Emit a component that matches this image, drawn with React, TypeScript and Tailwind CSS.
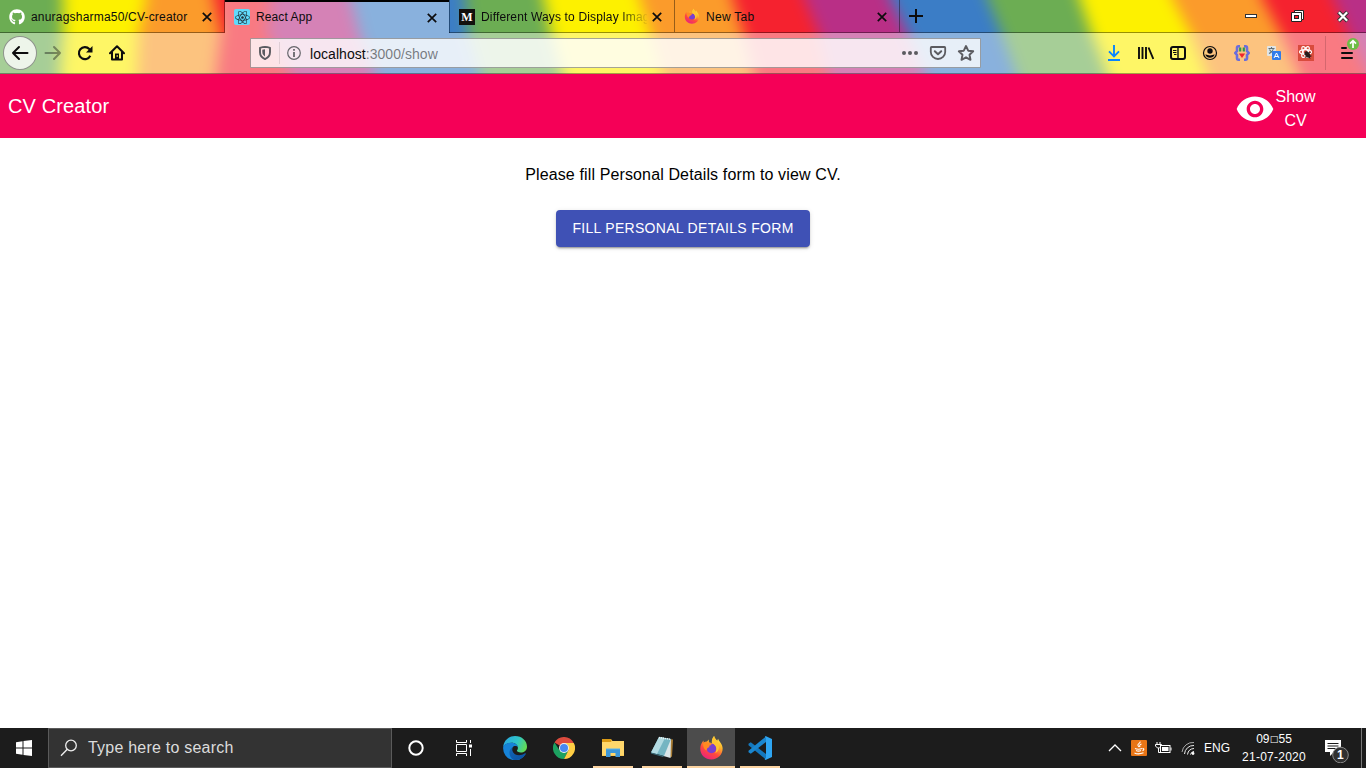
import React from "react";
import { FaGithub, FaReact } from "react-icons/fa";
import { MdVisibility } from "react-icons/md";

const stripes: { color: string; top: number; mid: number; bottom: number }[] = [
  { color: "#6cad53", top: -40, mid: -40, bottom: -40 },
  { color: "#fdf100", top: 63, mid: 63, bottom: 60 },
  { color: "#fb9b2b", top: 146, mid: 139, bottom: 137 },
  { color: "#f5222f", top: 214, mid: 221, bottom: 216 },
  { color: "#b92f86", top: 271, mid: 267, bottom: 290 },
  { color: "#3b7dc6", top: 351, mid: 359, bottom: 375 },
  { color: "#6cad53", top: 465, mid: 468, bottom: 480 },
  { color: "#fdf100", top: 544, mid: 551, bottom: 562 },
  { color: "#fb9b2b", top: 640, mid: 650, bottom: 662 },
  { color: "#f5222f", top: 733, mid: 743, bottom: 754 },
  { color: "#b92f86", top: 805, mid: 818, bottom: 828 },
  { color: "#3b7dc6", top: 891, mid: 907, bottom: 925 },
  { color: "#6cad53", top: 988, mid: 1001, bottom: 1016 },
  { color: "#fdf100", top: 1080, mid: 1091, bottom: 1107 },
  { color: "#fb9b2b", top: 1173, mid: 1190, bottom: 1206 },
  { color: "#f5222f", top: 1263, mid: 1280, bottom: 1299 },
  { color: "#b92f86", top: 1334, mid: 1348, bottom: 1368 },
];

function ThemeArt() {
  return (
    <svg className="absolute inset-0 -z-10" width="1366" height="74" viewBox="0 0 1366 74">
      <defs>
        <filter id="soft" filterUnits="userSpaceOnUse" x="-40" y="-30" width="1450" height="140" colorInterpolationFilters="sRGB">
          <feGaussianBlur stdDeviation="7.5 3" />
        </filter>
      </defs>
      <g filter="url(#soft)">
        {stripes.map((s, i) => (
          <polygon
            key={i}
            fill={s.color}
            points={`${s.top - 5},-25 ${s.top},0 ${s.mid},32 ${s.bottom},73 ${s.bottom + 5},100 1410,100 1410,-25`}
          />
        ))}
      </g>
    </svg>
  );
}

function CloseX() {
  return (
    <svg width="10" height="10" viewBox="0 0 10 10" className="relative top-[1px] shrink-0">
      <path d="M.8 .8l8.400 8.400M9.200 .8L.8 9.200" stroke="#0c0c0d" strokeWidth="1.700" />
    </svg>
  );
}

function Firefox({ size, id }: { size: number; id: string }) {
  return (
    <svg width={size} height={size} viewBox="0 0 24 24" className="shrink-0">
      <defs>
        <linearGradient id={id} x1="0.8" y1="0" x2="0.25" y2="1">
          <stop offset="0" stopColor="#fff44f" />
          <stop offset="0.35" stopColor="#ffb12a" />
          <stop offset="0.65" stopColor="#ff4a3c" />
          <stop offset="1" stopColor="#e81e83" />
        </linearGradient>
      </defs>
      <path
        fill={`url(#${id})`}
        d="M14.5 1c.6 2.400 1.800 3.400 3 4.600.3-1.100.5-1.500.9-2 .4 1.700 1.500 2.500 2.600 4.200 1 1.600 1.700 3.300 1.700 5.200 0 6-4.700 10.500-10.700 10.500S1.200 19 1.200 13.100c0-3.200 1.300-5.900 3.100-7.900l.2 2.200c.9-.8 2-1.200 3.200-1.200L9.300 4.300l.3 2.900c1-.1 2 .2 2.700.8C12 5.200 12.800 2.600 14.500 1Z"
      />
      <ellipse cx="12" cy="12.800" rx="4.800" ry="4.600" fill="#7a3fd0" />
      <path fill="#ff8a22" d="M4 7.600c1.500-1.300 3.500-1.100 4.900-.1 1.300-.1 2.800.3 3.400 1-.4 1.300-1.400 1.800-2.800 2l.8 1c-1.900.5-3.100 1.500-2.900 3.300C5.200 14.400 3.700 11.500 4 7.600Z" />
      <path fill="#ffc431" d="M14.500 1c.2 2.700 4.800 5.500 4.700 10.500-.1 3-1.700 5-3.700 6 1.200-1.700 1.600-4.300.6-6.400-.7-1.600-2-2.700-3.600-3.300C12.300 5.300 13 2.500 14.500 1Z" />
    </svg>
  );
}

function Tab({ icon, title, fade }: { icon: React.ReactNode; title: React.ReactNode; fade?: boolean }) {
  return (
    <div className="flex h-[33px] w-[225px] items-center border-r border-b border-black/40 pr-[12px] pl-[9px]">
      {icon}
      <div
        className={
          fade
            ? "relative top-[1px] ml-[6px] w-[166px] whitespace-nowrap [mask-image:linear-gradient(to_right,black_138px,transparent_168px)]"
            : "relative top-[1px] ml-[6px] w-[166px] whitespace-nowrap"
        }
      >
        {title}
      </div>
      <span className="ml-auto"><CloseX /></span>
    </div>
  );
}

function TabStrip() {
  return (
    <div className="flex h-[33px] text-[12px] text-[#0c0c0d]">
      <Tab icon={<FaGithub size={16} color="#fff" className="relative top-[1px] shrink-0" />} title={<span className="tracking-[0.2px]">anuragsharma50/CV-creator</span>} />
      <div className="flex h-[33px] w-[224px] items-center border-t-2 border-black bg-white/40 pr-[12px] pb-[1px] pl-[9px]">
        <span className="flex size-4 items-center justify-center rounded-[2px] bg-[#61dafb]">
          <FaReact size={15} color="#20333c" />
        </span>
        <span className="ml-[6px] tracking-[0.1px]">React App</span>
        <span className="ml-auto"><CloseX /></span>
      </div>
      <div className="w-px border-b border-black/40 bg-black/40" />
      <Tab
        fade
        icon={
          <span className="relative top-[1px] flex size-4 shrink-0 items-center justify-center bg-[#12100e] font-['Liberation_Serif',serif] text-[12px] leading-none font-bold text-white">
            M
          </span>
        }
        title={<span className="tracking-[0.15px]">Different Ways to Display Imag</span>}
      />
      <Tab icon={<Firefox size={16} id="ffTab" />} title={<span className="tracking-[0.3px]">New Tab</span>} />
      <div className="flex flex-1 items-center border-b border-black/40 pl-[8px]">
        <svg width="16" height="16" viewBox="0 0 16 16">
          <path d="M8 1v14M1 8h14" stroke="#0c0c0d" strokeWidth="2" />
        </svg>
        <div className="ml-auto flex w-[124px] items-center">
          <svg width="124" height="20" viewBox="0 0 124 20">
            <rect x="3.500" y="8.500" width="11" height="3" fill="#fff" stroke="#333" />
            <path d="M52.500 4.500h9v9h-2v2h-10v-9h3z" fill="#fff" stroke="#222" />
            <path d="M52 6.500h7.500V13" fill="none" stroke="#222" />
            <rect x="52.500" y="9.500" width="4" height="3" fill="#f5222f" stroke="#222" />
            <path d="M96.500 6l9 9M105.500 6l-9 9" stroke="#333" strokeWidth="4" />
            <path d="M96.800 6.300l8.400 8.400M105.200 6.300l-8.400 8.400" stroke="#fff" strokeWidth="2.200" />
          </svg>
        </div>
      </div>
    </div>
  );
}

function AddressBar() {
  return (
    <div className="flex h-[30px] w-[731px] items-center rounded-[1px] border border-black/35 bg-white/80 pl-[7px]">
      <svg width="14" height="16" viewBox="0 0 14 16">
        <path d="M7 1.900c2 .1 3.700.5 5 .9v4.500c0 3.300-2.200 5.600-5 6.800-2.800-1.200-5-3.500-5-6.800V2.800c1.300-.4 3-.8 5-.9Z" fill="none" stroke="#5b5b60" strokeWidth="1.900" strokeLinejoin="round" />
        <path d="M7 4.200v7.300c-1.700-1-2.700-2.400-2.700-4.400V4.700c.8-.3 1.700-.4 2.700-.5Z" fill="#5b5b60" />
      </svg>
      <div className="ml-[7px] h-[22px] w-px bg-black/10" />
      <svg width="14" height="14" viewBox="0 0 14 14" className="ml-[7px]">
        <circle cx="7" cy="7" r="6.300" fill="none" stroke="#66666b" strokeWidth="1.200" />
        <path d="M7 3v1.800M7 6v5" stroke="#66666b" strokeWidth="1.800" />
      </svg>
      <span className="relative top-[1px] ml-[9px] text-[14px] tracking-[0.05px] text-black/50">
        <span className="text-[#0c0c0d]">localhost</span>:3000/show
      </span>
      <div className="ml-auto flex items-center pr-[5px]">
        <svg width="18" height="16" viewBox="0 0 18 16">
          <g fill="#5b5b60"><circle cx="3" cy="8" r="2" /><circle cx="9" cy="8" r="2" /><circle cx="15" cy="8" r="2" /></g>
        </svg>
        <svg width="18" height="16" viewBox="0 0 18 16" className="ml-[10px]">
          <path d="M2.500 2h13a.7.7 0 0 1 .7.700V7a7.200 7 0 0 1-14.400 0V2.700A.7.7 0 0 1 2.500 2Z" fill="none" stroke="#5b5b60" strokeWidth="1.800" />
          <path d="M5.800 6.300L9 9.300l3.200-3" fill="none" stroke="#5b5b60" strokeWidth="2" strokeLinecap="round" strokeLinejoin="round" />
        </svg>
        <svg width="18" height="18" viewBox="0 0 18 18" className="ml-[10px]">
          <path d="M9 2l2.200 4.700 5 .6-3.700 3.500 1 5L9 13.300l-4.500 2.500 1-5L1.800 7.300l5-.6Z" fill="none" stroke="#5b5b60" strokeWidth="1.900" strokeLinejoin="round" />
        </svg>
      </div>
    </div>
  );
}

function Extensions() {
  return (
    <div className="ml-auto flex items-center gap-[16px] pr-[12px]">
      <svg width="16" height="16" viewBox="0 0 16 16">
        <path d="M8 0v11M3 6.300L8 11.300 13 6.300M2 15h12" fill="none" stroke="#0a84ff" strokeWidth="1.900" />
      </svg>
      <svg width="16" height="16" viewBox="0 0 16 16">
        <path d="M1 2v12M4.500 2v12M8 2v12M10.500 2.500L15.300 14" stroke="#0c0c0d" strokeWidth="1.900" />
      </svg>
      <svg width="16" height="16" viewBox="0 0 16 16">
        <rect x="1" y="2" width="14" height="12" rx="2" fill="none" stroke="#0c0c0d" strokeWidth="2" />
        <path d="M8 2v12" stroke="#0c0c0d" strokeWidth="1.400" />
        <path d="M3 5.500h3.500M3 7.500h3.500M4 9.500h2.500" stroke="#0c0c0d" />
      </svg>
      <svg width="16" height="16" viewBox="0 0 16 16">
        <circle cx="8" cy="8" r="6.500" fill="none" stroke="#0c0c0d" strokeWidth="1.200" />
        <circle cx="8" cy="6" r="2.700" fill="#0c0c0d" />
        <path d="M3.300 9.500c1.700-.3 2.500.9 4.700.9s3-1.200 4.700-.9C12 12 10 12.700 8 12.700S4 12 3.300 9.500Z" fill="#0c0c0d" />
      </svg>
      <svg width="16" height="16" viewBox="0 0 16 16">
        <path d="M6 1.300H4.500Q3 1.300 3 3v3L1.300 8 3 10v3q0 1.700 1.500 1.700H6M10 1.300h1.500Q13 1.300 13 3v3l1.700 2L13 10v3q0 1.700-1.500 1.700H10" fill="none" stroke="#6a6ddc" strokeWidth="2.600" />
        <path d="M6.200 2.500v4M9.800 2.500v4" stroke="#2c9a4e" strokeWidth="2.200" />
        <path d="M4.800 8.500h6.400L8 13Z" fill="#f0252b" />
      </svg>
      <svg width="16" height="16" viewBox="0 0 16 16">
        <rect x="1" y="1" width="9" height="10" rx="1" fill="#e0e5e6" />
        <path d="M2.500 3.500h6M5.500 2v1.500M7.500 3.500C7 6 5 7.500 3 8.500M3.500 4.500C4.500 6.500 6 7.500 8 8" fill="none" stroke="#607078" strokeWidth="1.100" />
        <rect x="6" y="6" width="9" height="9" rx="1" fill="#307bea" />
        <path d="M8 13l2.500-5 2.500 5M9 11.500h3" fill="none" stroke="#fff" />
      </svg>
      <svg width="16" height="16" viewBox="0 0 16 16">
        <rect width="16" height="16" fill="#d94b3d" />
        <g fill="none" stroke="#fff" strokeWidth="1.200">
          <ellipse cx="7.500" cy="7" rx="6" ry="2.400" />
          <ellipse cx="7.500" cy="7" rx="6" ry="2.400" transform="rotate(60 7.500 7)" />
          <ellipse cx="7.500" cy="7" rx="6" ry="2.400" transform="rotate(120 7.500 7)" />
        </g>
        <ellipse cx="9.500" cy="9.500" rx="2.300" ry="3.600" fill="#281b1a" transform="rotate(-35 9.500 9.500)" />
        <path d="M6.500 9.500l6-2M7 12l6.500-1M9 7.500l3 6" stroke="#281b1a" />
      </svg>
      <div className="relative -ml-[5px] flex h-[34px] w-[29px] items-center border-l border-black/15 pl-[14px]">
        <svg width="14" height="16" viewBox="0 0 14 16">
          <path d="M2 3h4M2 8h10M2 13h10" stroke="#0c0c0d" strokeWidth="2" strokeLinecap="round" />
        </svg>
        <svg width="12" height="12" viewBox="0 0 12 12" className="absolute top-[2px] left-[21px]">
          <circle cx="6" cy="6" r="6" fill="#6dbd45" />
          <path d="M6 10V3M3 5.700L6 2.700l3 3" fill="none" stroke="#fff" strokeWidth="1.700" />
        </svg>
      </div>
    </div>
  );
}

function Toolbar() {
  return (
    <div className="flex h-[41px] items-center border-b border-black/35 bg-white/40">
      <div className="flex w-[250px] items-center pl-[3px]">
        <span className="flex size-[34px] items-center justify-center rounded-full border border-black/40 bg-white/80">
          <svg width="18" height="16" viewBox="0 0 18 16">
            <path d="M16.500 8H2M8 2L2 8l6 6" fill="none" stroke="#0c0c0d" strokeWidth="2" strokeLinecap="round" strokeLinejoin="round" />
          </svg>
        </span>
        <svg width="18" height="16" viewBox="0 0 18 16" className="ml-[7px]">
          <path d="M1.500 8h14.500M10 2l6 6-6 6" fill="none" stroke="#0c0c0d" strokeOpacity="0.4" strokeWidth="2" strokeLinecap="round" strokeLinejoin="round" />
        </svg>
        <svg width="16" height="16" viewBox="0 0 16 16" className="ml-[15px]">
          <path d="M13.300 10.800A6 6 0 1 1 12.300 4L14 5.700" fill="none" stroke="#0c0c0d" strokeWidth="2.100" />
          <path d="M15.500 1v6.500H9z" fill="#0c0c0d" />
        </svg>
        <svg width="16" height="16" viewBox="0 0 16 16" className="ml-[16px]">
          <path d="M1 8.200L8 1.300l7 6.900M3 7v7.500h10V7" fill="none" stroke="#0c0c0d" strokeWidth="2" strokeLinecap="round" strokeLinejoin="round" />
          <path d="M6 14V8.500h4V14Z" fill="#0c0c0d" /><path d="M8.200 10v2" stroke="#ffed4e" />
        </svg>
      </div>
      <AddressBar />
      <Extensions />
    </div>
  );
}

function Page() {
  return (
    <>
      <header className="flex h-[64px] shrink-0 items-center bg-[#f50057] pr-[50px] pl-[8px] text-white">
        <h1 className="text-[20px] tracking-[0.13px]">CV Creator</h1>
        <div className="ml-auto flex items-center pt-[5px]">
          <MdVisibility size={40} />
          <div className="w-[41px] text-center text-[16px] leading-[24px]">Show CV</div>
        </div>
      </header>
      <main className="flex flex-1 flex-col items-center bg-white pt-[25px]">
        <p className="text-[16px] leading-[24px] tracking-[0.13px] text-black">Please fill Personal Details form to view CV.</p>
        <button className="mt-[23px] h-[37px] w-[254px] rounded-[4px] bg-[#3f51b5] text-[14px] tracking-[0.3px] whitespace-nowrap text-white shadow-[0_3px_1px_-2px_rgba(0,0,0,.2),0_2px_2px_0_rgba(0,0,0,.14),0_1px_5px_0_rgba(0,0,0,.12)]">
          FILL PERSONAL DETAILS FORM
        </button>
      </main>
    </>
  );
}

function EdgeIcon() {
  return (
    <svg width="24" height="24" viewBox="0 0 24 24">
      <defs>
        <linearGradient id="edgeTop" x1="0" y1="0.300" x2="1" y2="0.600">
          <stop offset="0" stopColor="#29a9e1" /><stop offset="0.550" stopColor="#2fc5c8" /><stop offset="1" stopColor="#65dc50" />
        </linearGradient>
        <linearGradient id="edgeLow" x1="0" y1="0" x2="1" y2="1">
          <stop offset="0" stopColor="#1267b8" /><stop offset="1" stopColor="#0b4f9e" />
        </linearGradient>
      </defs>
      <path d="M.2 11C.8 4.500 6 0 12 0c7 0 12 5 12 10.500 0 4-3 6-6.200 6-2.500 0-3.900-1-3.900-1.700 0-.6 1-1 1-2.800 0-3-3-5.200-6.300-5.200C4.400 6.800.8 9 .2 11Z" fill="url(#edgeTop)" />
      <path d="M.1 12C.2 8.800 4 6.800 8.300 6.800c3.500 0 6.300 2 6.600 4.500-1.200-1.600-4-1.600-5.400.2-2.500 3.200.2 8.700 5.500 8.700 3 0 5.500-1 6.700-2.500.6-.6 1.200-.1.800.6A12 12 0 0 1 .1 12Z" fill="#1683d8" />
      <path d="M9.800 11.100c-5 2.900-4 9.400.2 12.700A12 12 0 0 0 22.500 18c.2-.5-.3-.8-.8-.4-4.500 3-11 1.900-12.200-2.600-.4-1.400-.2-2.800.3-3.900Z" fill="url(#edgeLow)" />
    </svg>
  );
}

function ChromeIcon() {
  return (
    <svg width="22" height="22" viewBox="0 0 22 22">
      <path d="M11 11L1.470 5.500A11 11 0 0 1 20.530 5.500L20 6H11Z" fill="#dd4b3e" />
      <path d="M1.470 5.500A11 11 0 0 0 11 22l4.330-8.500L11 11 6.670 13.500Z" fill="#1da261" />
      <path d="M20.530 5.500A11 11 0 0 1 11 22l4.330-8.500L15 8 11 6h9.500Z" fill="#ffce44" />
      <circle cx="11" cy="11" r="5" fill="#f2f2f2" />
      <circle cx="11" cy="11" r="4" fill="#4688f2" />
    </svg>
  );
}

function Running({ children }: { children: React.ReactNode }) {
  return <div className="flex h-full w-[40px] items-center justify-center border-b-2 border-[#fbd3a0] pt-[2px]">{children}</div>;
}

function Taskbar() {
  return (
    <footer className="flex h-[40px] shrink-0 items-center bg-[#1c1c1c] text-white">
      <div className="flex w-[48px] justify-center">
        <svg width="16" height="16" viewBox="0 0 16 16" fill="#fff">
          <path d="M0 2.200L6.500 1.300V7.500H0ZM7.500 1.100L16 0v7.500H7.500ZM0 8.500h6.500v6.200L0 13.800ZM7.500 8.500H16V16l-8.500-1.100Z" />
        </svg>
      </div>
      <div className="flex h-full w-[344px] items-center border border-[#5a5a5a] bg-[#333] pl-[11px]">
        <svg width="18" height="18" viewBox="0 0 18 18">
          <circle cx="11" cy="6.500" r="5.300" fill="none" stroke="#eee" strokeWidth="1.300" />
          <path d="M7.300 10.300L1 16.700" stroke="#eee" strokeWidth="1.400" />
        </svg>
        <span className="ml-[10px] text-[16px] tracking-[0.22px] text-[#dcdcdc]">Type here to search</span>
      </div>
      <div className="flex w-[48px] justify-center">
        <svg width="16" height="16" viewBox="0 0 16 16"><circle cx="8" cy="8" r="6.700" fill="none" stroke="#fff" strokeWidth="2" /></svg>
      </div>
      <div className="flex w-[48px] justify-center pr-px">
        <svg width="17" height="16" viewBox="0 0 17 16" fill="none" stroke="#fff">
          <path d="M1.500 0v2.500h10V0M1.500 16v-2.500h10V16M1.500 4.500h10v7h-10zM15.500 0v3M15.500 9v7" />
          <rect x="14" y="4.500" width="3" height="3" fill="#fff" stroke="none" />
        </svg>
      </div>
      <div className="flex w-[52px] justify-center pl-[2px]"><EdgeIcon /></div>
      <div className="flex w-[48px] justify-center"><ChromeIcon /></div>
      <div className="ml-[5px] flex h-full items-center">
        <Running>
          <svg width="22" height="20" viewBox="0 0 22 20">
            <path d="M0 1.500Q0 1 .5 1H9l1.500 2H22v15H0Z" fill="#f5bd42" />
            <path d="M0 1.500Q0 1 .5 1H9v3H0Z" fill="#dc9b16" />
            <path d="M0 4h9l1.500-1H22v14.500H0Z" fill="#ffd76b" />
            <path d="M4 11h14v8h-4.500v-4h-5v4H4Z" fill="#3d97d8" />
            <path d="M4 11h14" stroke="#5bb4ef" />
          </svg>
        </Running>
        <div className="ml-[9px] h-full">
          <Running>
            <svg width="24" height="24" viewBox="0 0 24 24">
              <path d="M20 3l3 .5-1 17-2 1Z" fill="#a97d35" />
              <path d="M9 1l12 2-.5 19-7-2Z" fill="#dbe6e8" />
              <path d="M9 1l12 2-7 17L1 16.500Z" fill="#75b5c2" />
              <path d="M9 1l6 1L7 18l-6-1.500Z" fill="#b3dbe2" />
              <path d="M1 16.500l13 3.500-1 1-12-3.500Z" fill="#3c6c7a" />
              <path d="M9 1.500l12 2" stroke="#eef5f5" strokeWidth="1.500" strokeDasharray="1 1" />
            </svg>
          </Running>
        </div>
        <div className="ml-[5px] flex h-full w-[48px] items-center justify-center border-b-2 border-[#fbd3a0] bg-[#4c4c4c]"><Firefox size={25} id="ffTask" /></div>
        <div className="ml-[5px] h-full">
          <Running>
            <svg width="24" height="24" viewBox="0 0 24 24">
              <path d="M.5 7.800L2.800 6.200 18 18v5.500L.5 9.300Z" fill="#1478be" />
              <path d="M.5 16.200L2.800 17.800 18 6V.500L.5 14.700Z" fill="#1a86cf" />
              <path d="M17.500 0L24 3v18l-6.500 3-1-1 1.500-1V2l-1-1Z" fill="#2ea5f2" />
            </svg>
          </Running>
        </div>
      </div>
      <div className="ml-auto flex h-full items-center">
        <svg width="14" height="10" viewBox="0 0 14 10"><path d="M1 8l6-6 6 6" fill="none" stroke="#fff" strokeWidth="1.300" /></svg>
        <svg width="16" height="16" viewBox="0 0 16 16" className="ml-[9px]">
          <rect width="16" height="16" rx="1" fill="#e87516" />
          <path d="M9 1.500c1 1.500-3 2.200-2 4l1 1.500M10.500 4C8 5 8.500 5.500 9 7M4 8.500c2 .9 5 .8 7 0M5 10.500c1.500.7 3.500.7 5 0M3.500 13c2 1 6 1 9-.2M11.500 8.500c2 0 1.500 1.700 0 2.300" fill="none" stroke="#fff" strokeWidth="1.100" />
        </svg>
        <svg width="17" height="16" viewBox="0 0 17 16" className="ml-[8px]">
          <path d="M2 2v2M5 2v2M.5 4.500h6v1.500L4.500 8h-2L.500 6ZM3.500 8v3" fill="none" stroke="#fff" />
          <rect x="5.500" y="5.500" width="9.500" height="7" fill="#1c1c1c" stroke="#fff" />
          <rect x="7" y="7" width="6.500" height="4" fill="#fff" /><path d="M16 7.500v3" stroke="#fff" />
          <path d="M3.500 10.500v2H6" fill="none" stroke="#fff" />
        </svg>
        <svg width="14" height="14" viewBox="0 0 14 14" className="ml-[9px]" fill="none">
          <path d="M1 11A11 11 0 0 1 13 1.500" stroke="#aaa" />
          <path d="M3.500 13A9 9 0 0 1 13 4.500M6.500 13.500A7 7 0 0 1 13 7.500" stroke="#eee" />
          <path d="M9.500 13.500A4 4 0 0 1 13 10.500" stroke="#fff" /><circle cx="12" cy="12.500" r="1.400" fill="#fff" />
        </svg>
        <span className="ml-[9px] w-[27px] text-[12px]">ENG</span>
        <div className="ml-[9px] flex w-[68px] flex-col items-center text-[12px] leading-[18px] whitespace-nowrap">
          <span className="flex items-center">09<span className="w-[9px] text-center font-['DejaVu_Sans',sans-serif] text-[9px] leading-[18px]">□</span>55</span>
          <span className="tracking-[0.25px]">21-07-2020</span>
        </div>
        <div className="relative ml-[16px] h-[30px] w-[36px]">
          <svg width="28" height="30" viewBox="0 0 28 30">
            <path d="M1 7h16v12h-7l-4 4v-4H1Z" fill="#fff" />
            <path d="M3.500 10.500h11M3.500 13h11M3.500 15.500h8" stroke="#1c1c1c" />
            <circle cx="16.500" cy="22" r="7.800" fill="#303030" stroke="#888" />
          </svg>
          <span className="absolute top-[14px] left-[13px] text-[12px] leading-[16px] font-bold">1</span>
        </div>
        <div className="ml-px h-full w-[5px] border-l border-[#777]" />
      </div>
    </footer>
  );
}

export default function App() {
  return (
    <div className="flex h-[768px] w-[1366px] flex-col overflow-hidden bg-white font-['Liberation_Sans',Arial,sans-serif]">
      <div className="relative isolate h-[74px] shrink-0 overflow-hidden">
        <ThemeArt />
        <TabStrip />
        <Toolbar />
      </div>
      <Page />
      <Taskbar />
    </div>
  );
}
